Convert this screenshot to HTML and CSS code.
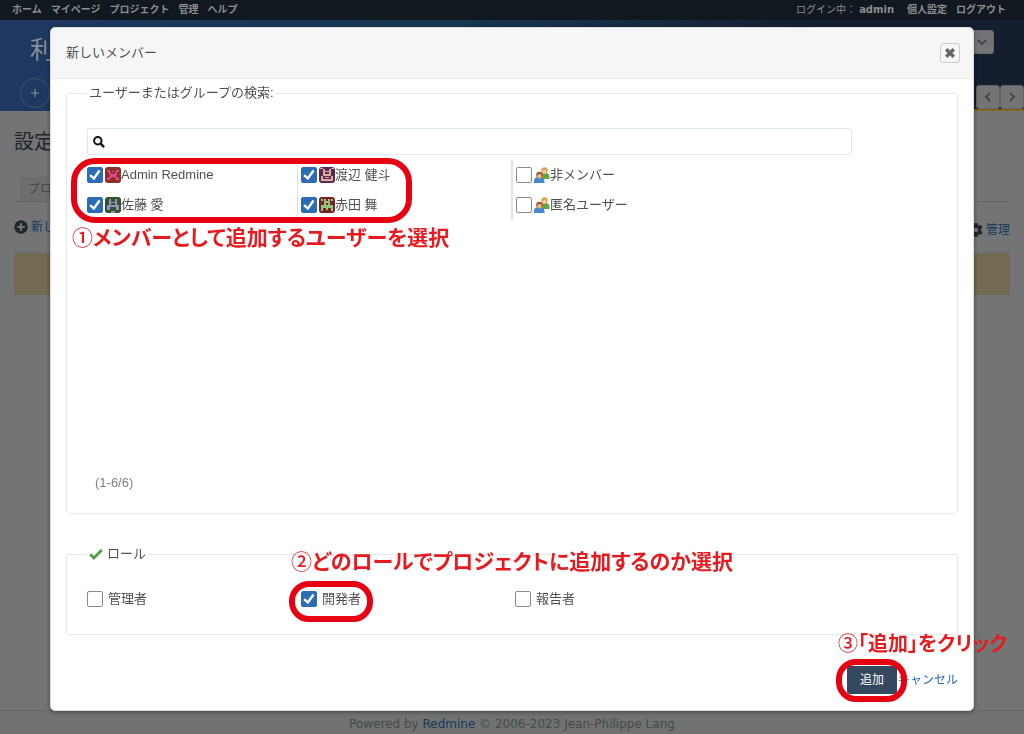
FILE: index.html
```
<!DOCTYPE html>
<html lang="ja">
<head>
<meta charset="utf-8">
<title>新しいメンバー</title>
<link rel="stylesheet" href="styles.css">
</head>
<body>
<div class="page">
  <nav class="top-menu">
    <a href="#">ホーム</a><a href="#">マイページ</a><a href="#">プロジェクト</a><a href="#">管理</a><a href="#">ヘルプ</a>
    <span class="logged-as">ログイン中： <a href="#">admin</a></span>
    <a href="#">個人設定</a><a href="#">ログアウト</a>
  </nav>
  <header class="header">
    <div class="header-row">
      <h1 class="project">利</h1>
      <button class="jump" type="button" aria-label="プロジェクトへ移動"><svg viewBox="0 0 12 12" width="12" height="12"><path d="M2 4l4 4 4-4" fill="none" stroke="currentColor" stroke-width="2"/></svg></button>
    </div>
    <div class="header-row tabs-row">
      <button class="new-object" type="button" aria-label="追加"><svg viewBox="0 0 12 12" width="12" height="12"><path d="M6 2v8M2 6h8" stroke="currentColor" stroke-width="1.2"/></svg></button>
      <div class="scroll">
        <button type="button" aria-label="前へ"><svg viewBox="0 0 12 12" width="12" height="12"><path d="M8 2L4 6l4 4" fill="none" stroke="currentColor" stroke-width="2"/></svg></button>
        <button type="button" aria-label="次へ"><svg viewBox="0 0 12 12" width="12" height="12"><path d="M4 2l4 4-4 4" fill="none" stroke="currentColor" stroke-width="2"/></svg></button>
      </div>
    </div>
  </header>
  <main class="main">
    <h2 class="heading">設定</h2>
    <div class="tabs"><a class="tab" href="#">プロ</a></div>
    <div class="contextual">
      <a class="icon-link" href="#"><svg viewBox="0 0 14 14" width="14" height="14"><circle cx="7" cy="7" r="6.7" fill="#222629"/><path d="M7 3.2v7.6M3.2 7h7.6" stroke="#727476" stroke-width="2.2"/></svg>新し</a>
      <a class="icon-link manage" href="#"><svg viewBox="0 0 14 14" width="14" height="14"><path fill="#222629" fill-rule="evenodd" d="M5.6 0h2.8l.4 1.9 1.3.7 1.9-.6 1.4 2.4L12 5.800v2l1.500 1.500-1.400 2.500-1.900-.6-1.400.8L8.400 14H5.600l-.4-1.900-1.300-.8-1.900.6L.6 9.400 2 8.100V5.900L.6 4.500 2 2.100l1.900.6 1.300-.8zM7 4.800a2.200 2.200 0 100 4.400 2.200 2.200 0 000-4.400z"/></svg>管理</a>
    </div>
    <div class="nodata"></div>
  </main>
  <footer class="footer">Powered by <a href="#">Redmine</a> © 2006-2023 Jean-Philippe Lang</footer>
</div>

<div class="overlay">
  <section class="dialog" role="dialog" aria-labelledby="dialog-title">
    <div class="titlebar">
      <h2 id="dialog-title">新しいメンバー</h2>
      <button class="close" type="button" aria-label="閉じる"><svg viewBox="0 0 12 12" width="12" height="12"><path d="M2.200 2.200l7.600 7.600M9.800 2.200L2.200 9.800" stroke="#666" stroke-width="3.400"/></svg></button>
    </div>
    <form class="form">
      <fieldset class="box">
        <legend><label for="search">ユーザーまたはグループの検索:</label></legend>
        <div class="search">
          <svg viewBox="0 0 12 12" width="12" height="12"><circle cx="4.800" cy="4.800" r="3.700" fill="none" stroke="#111" stroke-width="2"/><path d="M7.500 7.500l3.600 3.600" stroke="#111" stroke-width="2.400"/></svg>
          <input id="search" type="text">
        </div>
        <div class="principals">
          <div class="column">
            <label><input type="checkbox" checked><svg class="avatar" viewBox="0 0 16 16"><rect width="16" height="16" rx="3" fill="#8f2f26"/><path fill="#dc4a91" d="M2 3h3v2h1v2h4V5h1V3h3v2h-2v3h-1v2h2v1h1v2h-3v-2H9v-1H7v1H5v2H2v-2h1v-1h2V8H4V5H2zM7 4h2v1H7z"/></svg>Admin Redmine</label>
            <label><input type="checkbox" checked><svg class="avatar" viewBox="0 0 16 16"><rect width="16" height="16" rx="3" fill="#335328"/><path fill="#938fc7" d="M4 2h2v3h4V2h2v6h2v5h-3v-3H5v3H2V8h2zM6 6v2h4V6zM6 14h4v2H6z"/></svg>佐藤 愛</label>
          </div>
          <div class="column second">
            <label><input type="checkbox" checked><svg class="avatar" viewBox="0 0 16 16"><rect width="16" height="16" rx="3" fill="#592953"/><path fill="#d8ad9c" d="M1 1h3v1H1zM12 1h3v1h-3zM4 2h2v2h4V2h2v7H4zM6 5v2h4V5zM2 9h2v3h8V9h2v5H2zM6 10h4v1H6z"/></svg>渡辺 健斗</label>
            <label><input type="checkbox" checked><svg class="avatar" viewBox="0 0 16 16"><rect width="16" height="16" rx="3" fill="#772323"/><path fill="#91c47c" d="M2 2h2v2H2zM12 2h2v2h-2zM5 2h2v2h2V2h2v6h3v6h-2v-3H9v2H7v-2H4v3H2V8h3zM7 6v2h2V6z"/></svg>赤田 舞</label>
          </div>
          <div class="column third">
            <label><input type="checkbox"><svg class="avatar" viewBox="0 0 16 16"><path fill="#61a844" d="M7 9q0-3 4-3t4.500 3v3H8z"/><circle cx="10.500" cy="3.500" r="3.200" fill="#dfa24d"/><circle cx="10.500" cy="4.800" r="1.900" fill="#f6cf9e"/><path fill="#4b87cf" d="M0 16v-2q0-4 5-4t5.500 4v2z"/><circle cx="5.500" cy="8" r="3.300" fill="#9a573b"/><circle cx="5.500" cy="9.200" r="2.200" fill="#efb889"/></svg>非メンバー</label>
            <label><input type="checkbox"><svg class="avatar" viewBox="0 0 16 16"><path fill="#61a844" d="M7 9q0-3 4-3t4.500 3v3H8z"/><circle cx="10.500" cy="3.500" r="3.200" fill="#dfa24d"/><circle cx="10.500" cy="4.800" r="1.900" fill="#f6cf9e"/><path fill="#4b87cf" d="M0 16v-2q0-4 5-4t5.500 4v2z"/><circle cx="5.500" cy="8" r="3.300" fill="#9a573b"/><circle cx="5.500" cy="9.200" r="2.200" fill="#efb889"/></svg>匿名ユーザー</label>
          </div>
          <span class="ring ring-users"></span>
          <p class="note note-users"><span>①</span>メンバーとして追加するユーザーを選択</p>
        </div>
        <p class="pages">(1-6/6)</p>
      </fieldset>
      <fieldset class="box roles-box">
        <legend><svg viewBox="0 0 14 12" width="14" height="12"><path d="M1.200 6.200l3.700 3.700L12.800 2" fill="none" stroke="#50a14a" stroke-width="2.800"/></svg>ロール</legend>
        <div class="roles">
          <label><input type="checkbox">管理者</label>
          <label class="picked"><input type="checkbox" checked>開発者<span class="ring ring-role"></span></label>
          <label><input type="checkbox">報告者</label>
        </div>
        <p class="note note-role"><span>②</span>どのロールでプロジェクトに追加するのか選択</p>
      </fieldset>
      <div class="actions">
        <a href="#">キャンセル</a>
        <div class="submit">
          <button type="submit">追加</button>
          <span class="ring ring-submit"></span>
          <p class="note note-submit"><span>③</span>「追加」をクリック</p>
        </div>
      </div>
    </form>
  </section>
</div>
</body>
</html>
```
FILE: styles.css
```
* { box-sizing: border-box; }
body, h1, h2, p, fieldset { margin: 0; }
body {
  font-family: "DejaVu Sans", "Noto Sans CJK JP", sans-serif;
  font-size: 12px;
  color: #222629;
  background: #727476;
}
a { text-decoration: none; }
button { font: inherit; padding: 0; }
svg { display: block; flex: none; }

/* page behind the dialog */
.page { display: flex; flex-direction: column; min-height: 100vh; }
.top-menu {
  display: flex;
  align-items: center;
  gap: 9px;
  height: 20px;
  padding: 0 18px 4px 12px;
  background: #11181f;
  color: #8b8d8f;
  font-size: 10px;
}
.top-menu a { color: #8b8d8f; font-weight: bold; }
.logged-as { margin-left: auto; margin-right: 4px; }
.header {
  display: flex;
  flex-direction: column;
  justify-content: space-between;
  height: 91px;
  background: linear-gradient(90deg, #1f3862 0%, #173752 45%, #151f32 80%, #151e2f 100%);
}
.header-row { display: flex; justify-content: space-between; padding: 10px 30px 0; }
.project { font-size: 24px; line-height: 40px; font-weight: normal; color: #8b8f95; }
.jump {
  display: flex;
  align-items: center;
  justify-content: flex-end;
  width: 200px;
  height: 24px;
  padding-right: 5px;
  border: 1px solid #666869;
  border-radius: 3px;
  background: #737475;
  color: #444648;
}
.tabs-row { align-items: flex-end; padding: 0 0 0 20px; }
.new-object {
  display: grid;
  place-items: center;
  width: 30px;
  height: 30px;
  margin-bottom: 3px;
  border: 1px solid #3a566e;
  border-radius: 50%;
  background: transparent;
  color: #8b9299;
}
.scroll { display: flex; border-bottom: 2px solid #80671c; padding-left: 20px; }
.scroll button {
  display: grid;
  place-items: center;
  width: 24px;
  height: 24px;
  border: 1px solid #606263;
  border-radius: 3px;
  background: #737475;
  color: #444648;
}
.main { flex: 1; padding: 16px 14px; }
.heading { font-size: 20px; line-height: 30px; font-weight: normal; }
.tabs { display: flex; margin-top: 20px; padding-left: 6px; border-bottom: 1px solid #626466; }
.tab {
  padding: 0 7px;
  line-height: 23px;
  border: 1px solid #6a6c6d;
  border-bottom: 0;
  border-radius: 3px 3px 0 0;
  background: #6d6f6f;
  color: #46484a;
}
.contextual { display: flex; justify-content: space-between; align-items: flex-start; height: 25px; margin-top: 15px; }
.icon-link { display: flex; align-items: center; gap: 3px; line-height: 20px; color: #16385c; }
.manage { padding-top: 3px; }
.nodata { height: 42px; margin-top: 11px; border-radius: 3px; background: #736a52; }
.footer {
  border-top: 1px solid #646766;
  background: #6f7271;
  color: #464a4b;
  font-size: 12px;
  line-height: 20px;
  padding-top: 3px;
  text-align: center;
}
.footer a { color: #16385c; }

/* dialog */
.overlay { position: fixed; inset: 0; padding: 27px 50px; }
.dialog {
  border: 1px solid #ddd;
  border-radius: 5px;
  background: #fff;
  color: #505050;
  font-family: "Liberation Sans", "Noto Sans CJK JP", sans-serif;
  font-size: 13px;
  line-height: 20px;
  box-shadow: 0 1px 4px rgba(0, 0, 0, .4);
}
.titlebar {
  display: flex;
  align-items: center;
  justify-content: space-between;
  height: 51px;
  padding: 0 13px 0 15px;
  border-bottom: 1px solid #e9e9e9;
  border-radius: 4px 4px 0 0;
  background: #f6f6f6;
}
.titlebar h2 { font-size: 13px; font-weight: normal; }
.close {
  display: grid;
  place-items: center;
  width: 20px;
  height: 20px;
  border: 1px solid #ccc;
  border-radius: 3px;
  background: #f6f6f6;
}
.form { padding: 4px 15px 16px; }
.box {
  position: relative;
  min-width: 0;
  padding: 25px 14px 20px 20px;
  border: 1px solid #e3ebf1;
  border-radius: 3px;
}
.box legend { display: flex; align-items: center; gap: 4px; padding: 0 2px; line-height: 20px; }
.search {
  display: flex;
  align-items: center;
  height: 27px;
  margin-right: 91px;
  padding-left: 5px;
  border: 1px solid #dfe8f0;
  border-radius: 3px;
}
.search input { flex: 1; min-width: 0; border: 0; outline: 0; background: transparent; font: inherit; }
input[type="checkbox"] {
  appearance: none;
  flex: none;
  display: grid;
  place-items: center;
  width: 16px;
  height: 16px;
  margin: 0;
  border: 1px solid #8a8a8a;
  border-radius: 2px;
  background: #fff;
}
input[type="checkbox"]:checked { border-color: #2b6cb5; background: #2b6cb5; }
input[type="checkbox"]:checked::before {
  content: "";
  width: 12px;
  height: 12px;
  background: #fff;
  clip-path: polygon(2% 58%, 16% 44%, 38% 64%, 80% 7%, 96% 18%, 42% 93%);
}
.principals {
  position: relative;
  display: grid;
  grid-template-columns: repeat(4, 1fr);
  align-items: start;
  min-height: 313px;
  margin-top: 5px;
}
.column label { display: flex; align-items: center; height: 30px; }
.column input { margin-right: 2px; }
.avatar { width: 16px; height: 16px; }
.second { margin-left: -4px; padding-left: 3px; border-left: 1px solid #ddd; }
.third { margin-left: -4px; padding-left: 3px; border-left: 2px solid #e2e2e2; }
.pages { padding-left: 8px; color: #808080; }
.roles-box { margin-top: 30px; padding-bottom: 25px; }
.roles { display: grid; grid-template-columns: repeat(4, 1fr); }
.roles label { display: flex; align-items: center; gap: 5px; }
.picked { position: relative; }
.actions {
  display: flex;
  flex-direction: row-reverse;
  align-items: center;
  gap: 1px;
  margin-top: 31px;
  font-size: 12px;
}
.actions a { color: #2b6cb0; }
.submit { position: relative; }
.submit button {
  display: block;
  height: 28px;
  padding: 0 13px;
  border: 0;
  border-radius: 3px;
  background: #34495e;
  color: #fff;
}

/* callouts lying over the dialog */
.ring { position: absolute; border: 6px solid #e60012; pointer-events: none; }
.ring-users { left: -16px; top: -2px; width: 341px; height: 65px; border-radius: 24px; }
.ring-role { left: -12px; top: -8px; width: 84px; height: 41px; border-radius: 20px; }
.ring-submit { inset: -7px -10px -8px -11px; border-radius: 20px; }
.note {
  position: absolute;
  color: #e71a1f;
  font-family: "Noto Sans CJK JP", sans-serif;
  font-size: 21px;
  line-height: 26px;
  font-weight: bold;
  font-feature-settings: "palt";
  white-space: nowrap;
}
.note span { font-weight: 500; }
.note-users { left: -15px; top: 63px; }
.note-role { left: 224px; top: -17px; }
.note-submit { left: -9px; top: -36px; font-size: 20px; }
```
